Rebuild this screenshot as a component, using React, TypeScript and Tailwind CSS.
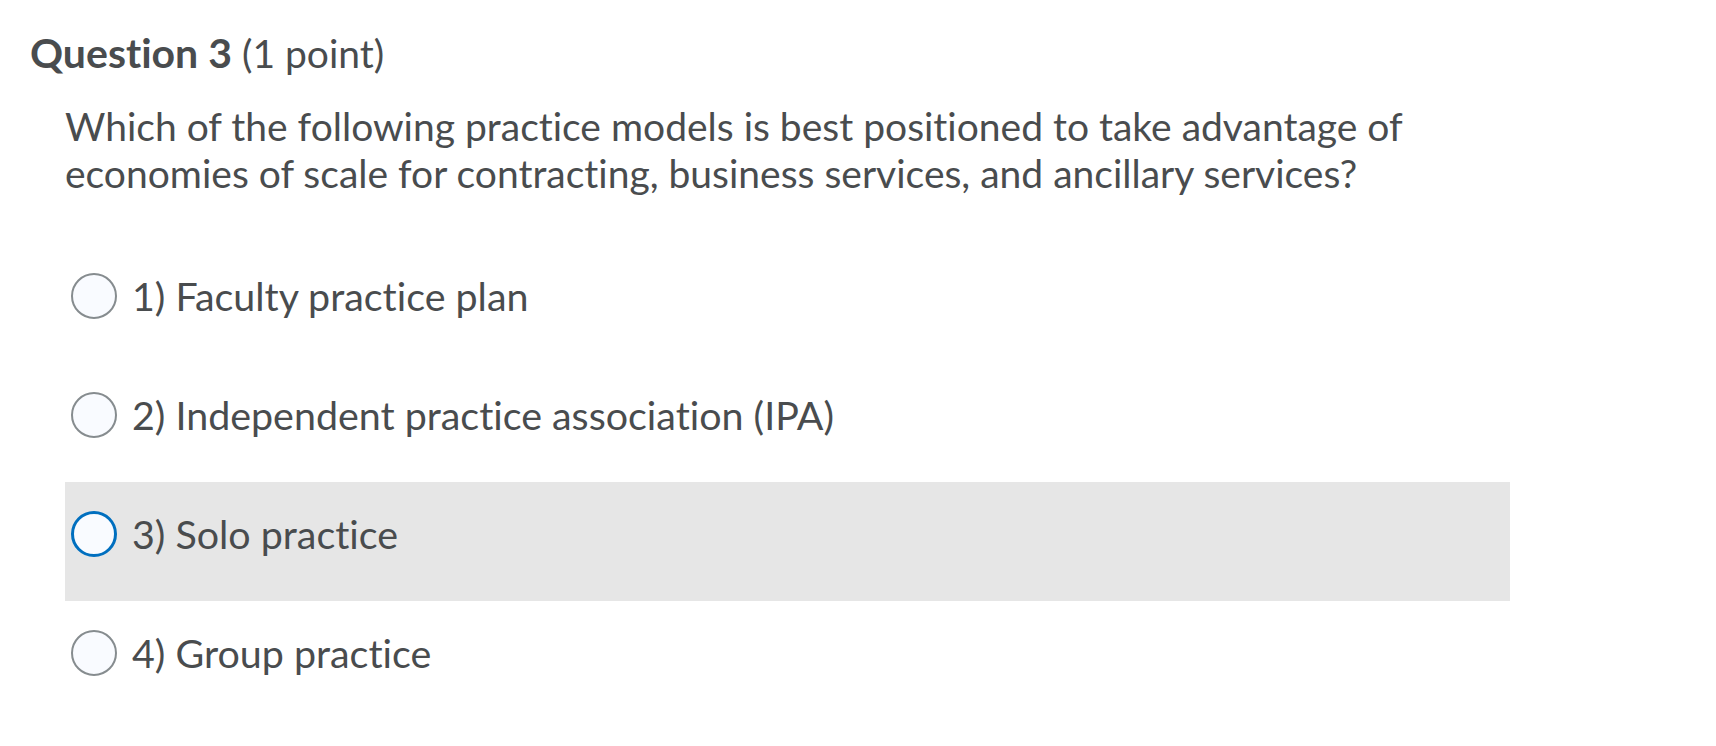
import React from "react";

const options = [
  { label: "1) Faculty practice plan", selected: false },
  { label: "2) Independent practice association (IPA)", selected: false },
  { label: "3) Solo practice", selected: true },
  { label: "4) Group practice", selected: false },
];

export default function App() {
  return (
    <div
      className="min-h-screen bg-white text-[#494c4e] [font-variant-ligatures:none]"
      style={{ fontFamily: "Lato, 'Noto Sans', sans-serif" }}
    >
      <div className="pl-[30px] pt-[29px]">
        <h2 className="h-[47px] text-[39px] leading-[47px]">
          <span className="text-[41px] leading-[47px] font-bold">Question 3</span> (1 point)
        </h2>
        <div className="pl-[35px]">
          <p className="mt-[27px] text-[39px] leading-[47px]">
            Which of the following practice models is best positioned to take advantage of
            <br />
            economies of scale for contracting, business services, and ancillary services?
          </p>
          <div className="mt-[47px] w-[1445px]">
            {options.map((o) => (
              <div
                key={o.label}
                className={`flex h-[119px] items-center pb-[16px] pl-[6px] ${o.selected ? "bg-[#e6e6e6]" : ""}`}
              >
                <span
                  className={`box-border h-[46px] w-[46px] shrink-0 rounded-full bg-[#f9fbff] ${
                    o.selected ? "border-[3px] border-[#006fbf]" : "border-2 border-[#868c8f]"
                  }`}
                />
                <span className="ml-[15px] text-[39.4px] leading-[47px]">{o.label}</span>
              </div>
            ))}
          </div>
        </div>
      </div>
    </div>
  );
}
